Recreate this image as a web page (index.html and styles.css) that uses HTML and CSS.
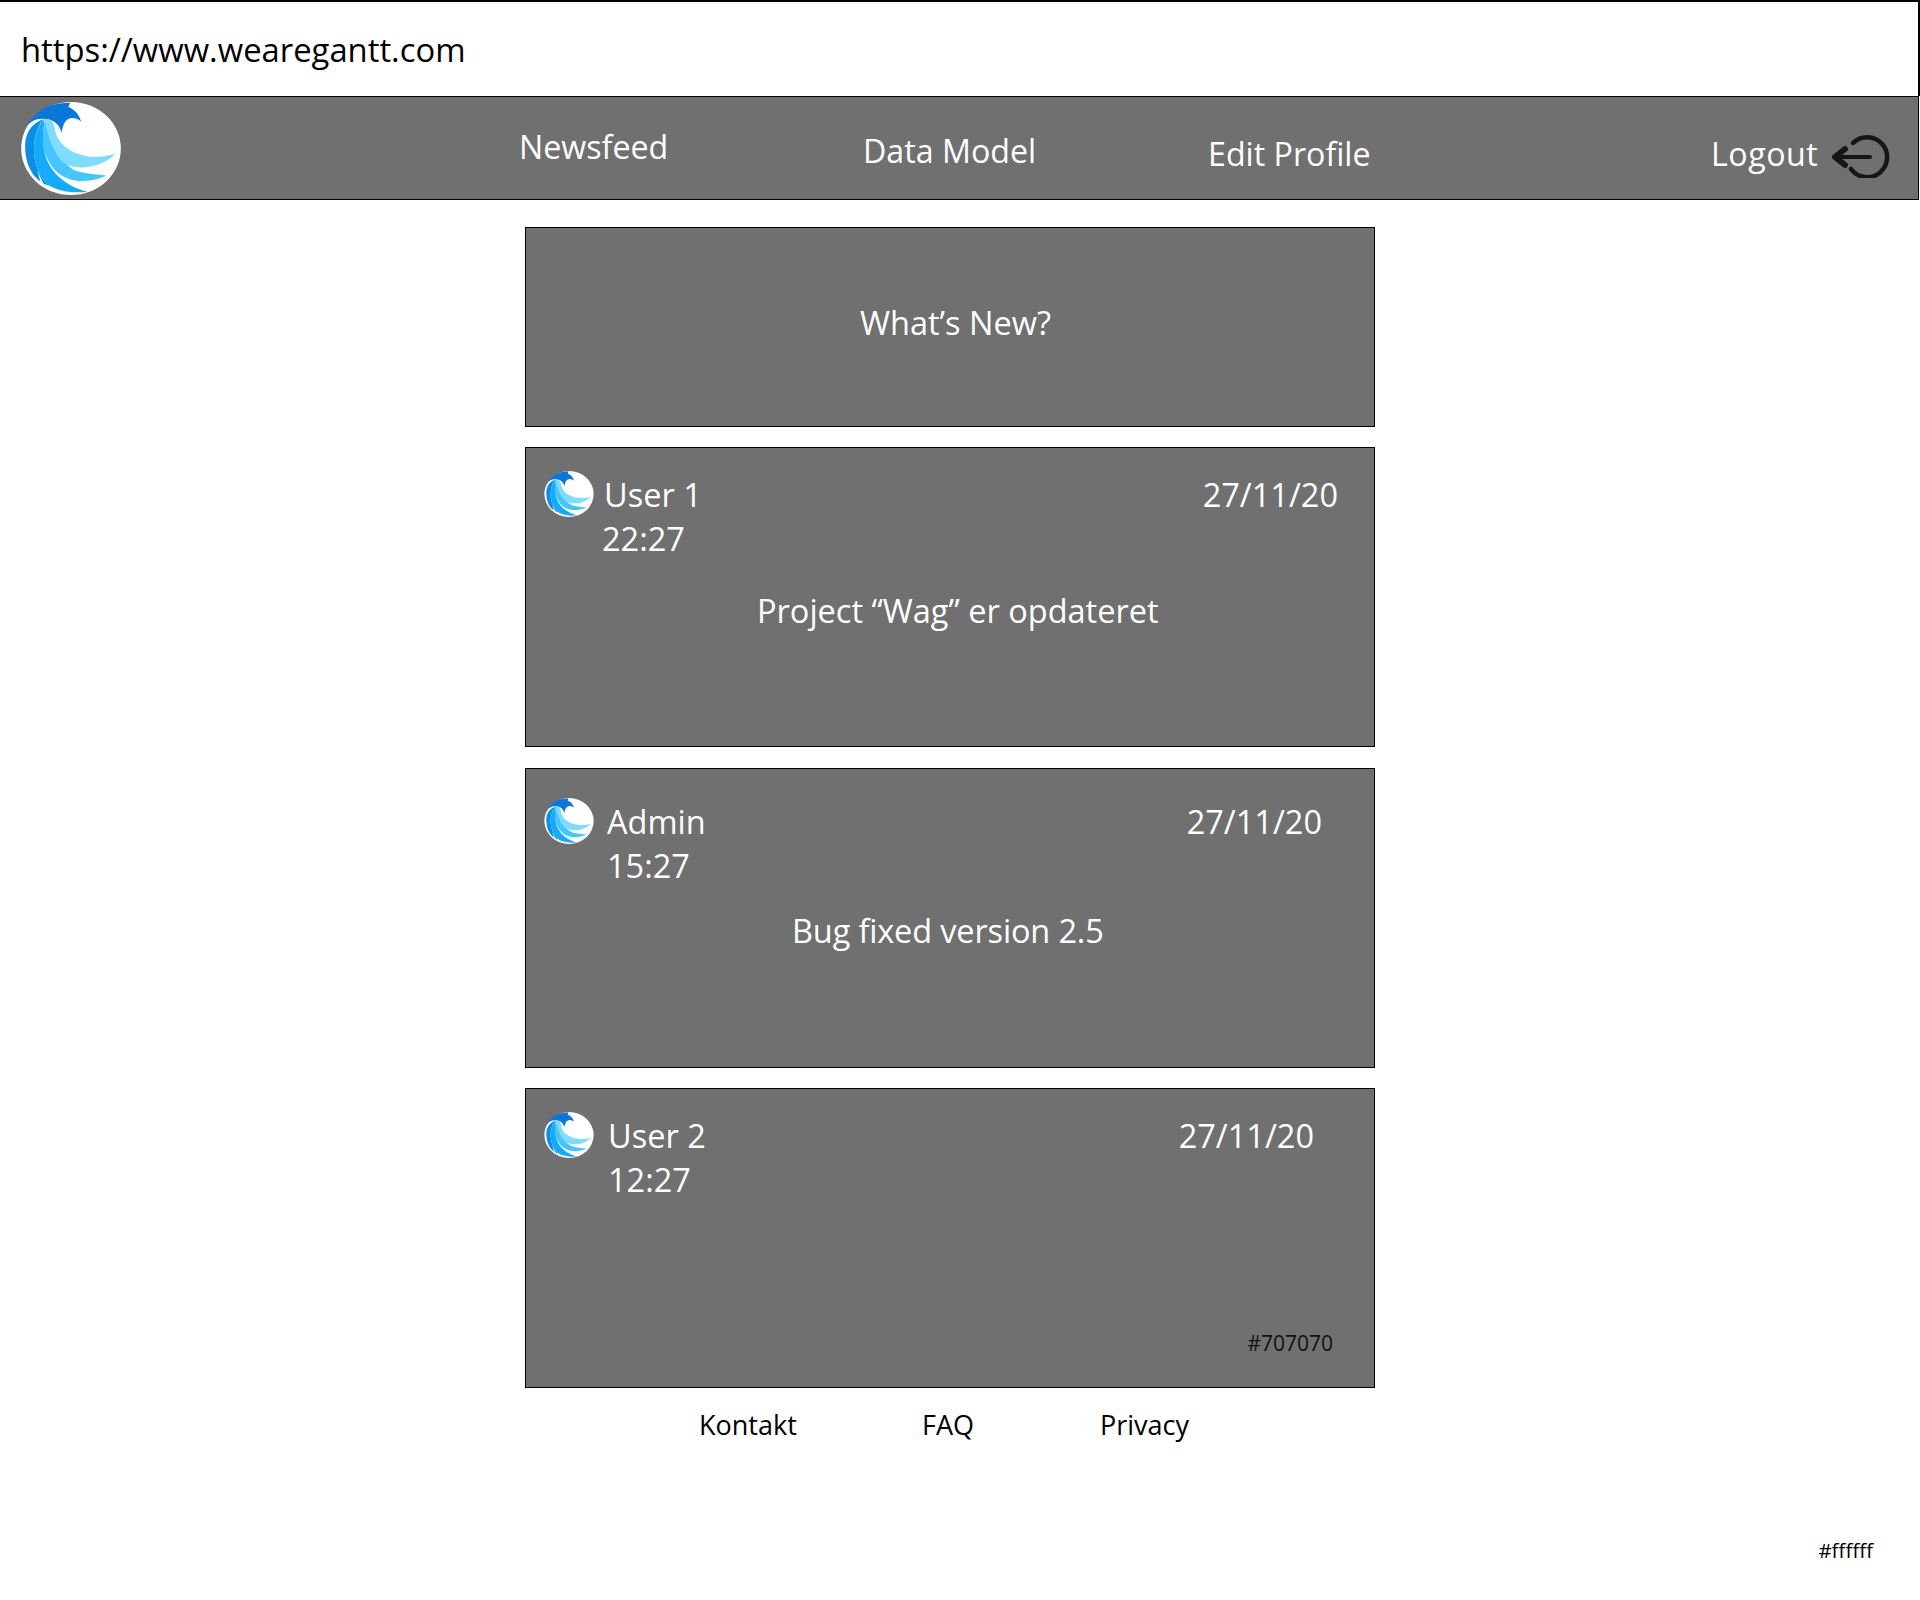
FILE: index.html
```html
<!DOCTYPE html>
<html lang="da">
  <head>
    <meta charset="UTF-8" />
    <title>WeAreGantt Newsfeed</title>
    <link rel="stylesheet" href="styles.css">
  </head>
  <body>
    <svg class="defs" width="0" height="0">
      <symbol id="logo" viewBox="64 35 298 278">
        <ellipse cx="213" cy="174" rx="149" ry="139" fill="#ffffff" />
        <path fill="#0a76d8" d="M76 112C105 62 145 42 186 39L210 37L205 50C225 58 237 72 243 93C225 78 205 80 195 95C189 105 187 115 185 127C178 100 160 86 130 85C108 84 90 94 76 112Z" />
        <path fill="#0b8fe6" d="M76 175C74 130 92 100 132 86C105 115 92 175 112 232C120 255 132 272 150 286C105 275 78 230 76 175Z" />
        <path fill="#16abfa" d="M134 86C105 115 92 175 112 232C120 255 132 272 150 286C180 303 225 308 262 303C205 290 150 250 135 190C128 155 130 120 134 86Z" />
        <path fill="#44c6fc" d="M136 88C126 130 126 170 140 200C155 232 172 250 200 262C235 278 285 272 318 255C290 252 262 250 235 243C195 232 150 170 136 88Z" />
        <path fill="#80dcfe" d="M135 86C158 84 163 102 167 126C182 182 262 216 346 190C312 226 250 240 205 224C170 210 145 150 135 86Z" />
        <path fill="#ffffff" d="M112 240L134 286L122 274Z" />
      </symbol>
    </svg>

    <div class="address">https://www.wearegantt.com</div>

    <nav class="nav">
      <svg class="nav-logo"><use href="#logo" /></svg>
      <a class="nav-link nav-up">Newsfeed</a>
      <a class="nav-link nav-mid">Data Model</a>
      <a class="nav-link nav-down">Edit Profile</a>
      <a class="nav-link nav-down logout">
        <span class="logout-text">Logout</span>
        <svg class="logout-icon" viewBox="0 -4 70 50">
          <path d="M28 11A20 20 0 1 1 26 37" />
          <path class="logout-shaft" d="M45 25H12" />
          <path class="logout-head" d="M20 17L10 25L20 33" />
        </svg>
      </a>
    </nav>

    <main class="feed">
      <section class="card card-new">What’s New?</section>

      <article class="card post">
        <div class="post-head">
          <svg class="avatar"><use href="#logo" /></svg>
          <div class="who who-1">
            <div>User 1</div>
            <div class="time-1">22:27</div>
          </div>
          <div class="date date-1">27/11/20</div>
        </div>
        <p class="msg msg-1">Project “Wag” er opdateret</p>
      </article>

      <article class="card post post-2">
        <div class="post-head">
          <svg class="avatar"><use href="#logo" /></svg>
          <div class="who who-2">
            <div>Admin</div>
            <div>15:27</div>
          </div>
          <div class="date date-2">27/11/20</div>
        </div>
        <p class="msg msg-2">Bug fixed version 2.5</p>
      </article>

      <article class="card post post-last">
        <div class="post-head">
          <svg class="avatar"><use href="#logo" /></svg>
          <div class="who who-3">
            <div>User 2</div>
            <div>12:27</div>
          </div>
          <div class="date date-3">27/11/20</div>
        </div>
        <div class="swatch">#707070</div>
      </article>

      <footer class="foot">
        <a class="foot-link">Kontakt</a>
        <a class="foot-link">FAQ</a>
        <a class="foot-link">Privacy</a>
      </footer>
    </main>

    <div class="page-swatch">#ffffff</div>
  </body>
</html>
```

FILE: styles.css
```css
* {
  box-sizing: border-box;
}
body {
  margin: 0;
  height: 1600px;
  background: #ffffff;
  color: #000000;
  font-family: "Open Sans", Arial, sans-serif;
  overflow: hidden;
}
.defs {
  display: block;
  height: 0;
}
.address {
  height: 96px;
  padding: 26px 0 0 21px;
  border-top: 2px solid #000;
  border-right: 2px solid #000;
  font-size: 32.8px;
  line-height: 44px;
}
.nav {
  display: grid;
  grid-template-columns: 519px 344px 345px 503px 1fr;
  align-items: center;
  width: 1919px;
  height: 104px;
  border-top: 1px solid #000;
  border-right: 1px solid #000;
  border-bottom: 1px solid #000;
  background: #707070;
  color: #fff;
  font-size: 32.2px;
  line-height: 44px;
}
.nav-logo {
  width: 100px;
  height: 93px;
  margin-left: 21px;
}
.nav-link {
  white-space: nowrap;
}
.nav-up {
  padding-bottom: 2px;
}
.nav-mid {
  padding-top: 6px;
}
.nav-down {
  padding-top: 12px;
}
.logout {
  display: flex;
  align-items: center;
  gap: 7px;
}
.logout-text {
  letter-spacing: 0.5px;
}
.logout-icon {
  width: 70px;
  height: 50px;
  margin-top: -2px;
  fill: none;
  stroke: #161616;
  stroke-width: 4.5;
  stroke-linecap: round;
  stroke-linejoin: round;
}
.logout-shaft {
  stroke-width: 4;
}
.logout-head {
  stroke-width: 6;
}
.feed {
  width: 850px;
  margin: 0 0 0 525px;
  padding-top: 27px;
}
.card {
  border: 1px solid #000;
  background: #707070;
  color: #fff;
  font-size: 32.5px;
  line-height: 44px;
}
.card-new {
  height: 200px;
  margin-bottom: 20px;
  padding: 73px 0 0 334px;
}
.post {
  position: relative;
  height: 300px;
  margin-bottom: 21px;
  padding: 23px 0 0 18px;
}
.post-2 {
  margin-bottom: 20px;
  padding-top: 29px;
}
.post-last {
  margin-bottom: 0;
}
.post-head {
  display: flex;
  align-items: flex-start;
}
.avatar {
  flex: none;
  width: 50px;
  height: 46px;
}
.who {
  flex: 1;
}
.who-1 {
  margin: 2px 0 0 10px;
}
.time-1 {
  margin-left: -2px;
}
.who-2 {
  margin: 2px 0 0 13px;
}
.who-3 {
  margin: 2px 0 0 14px;
}
.date-1 {
  margin: 2px 36px 0 0;
}
.date-2 {
  margin: 2px 52px 0 0;
}
.date-3 {
  margin: 2px 60px 0 0;
}
.msg {
  margin: 0;
  white-space: nowrap;
}
.msg-1 {
  padding: 28px 0 0 213px;
}
.msg-2 {
  padding: 21px 0 0 248px;
  letter-spacing: -0.15px;
}
.swatch {
  position: absolute;
  right: 41px;
  bottom: 30px;
  color: #111;
  font-size: 21px;
  line-height: 28px;
}
.foot {
  display: grid;
  grid-template-columns: 223px 178px auto;
  padding: 19px 0 0 174px;
  font-size: 27px;
  line-height: 36px;
}
.page-swatch {
  margin-top: 93px;
  padding-right: 47px;
  text-align: right;
  font-size: 20.5px;
  line-height: 28px;
}
```
